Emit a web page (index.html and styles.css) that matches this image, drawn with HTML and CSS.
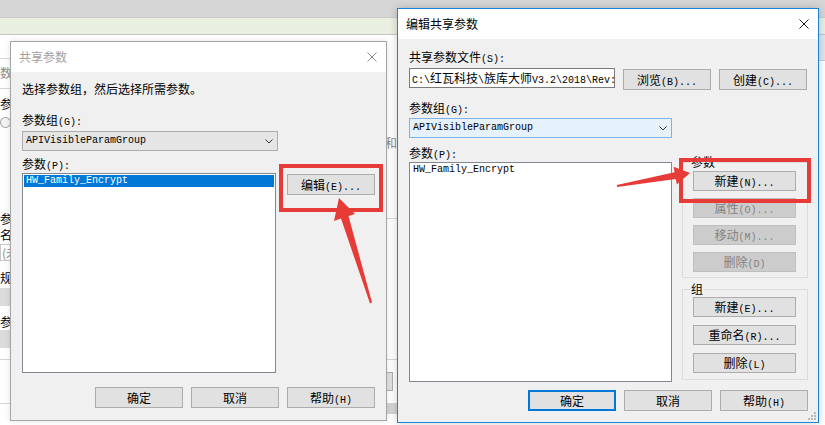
FILE: index.html
```html
<!DOCTYPE html>
<html lang="zh-CN">

<head>
    <meta charset="UTF-8">
    <meta name="viewport" content="width=device-width, initial-scale=1.0">
    <title>编辑共享参数</title>

    <link rel="stylesheet" href="styles.css">
</head>

<body>
    <!-- application window behind the dialogs -->
    <div class="desk">
        <div class="app-bar"></div>
        <div class="app-strip"></div>
        <div class="app-body">
            <div class="bg-win">
                <div class="bg-col bg-col-left">
                    <div class="bg-tabbar"></div>
                    <p class="bg-text bg-faint bg-t1">数据</p>
                    <div class="bg-rule bg-r1"></div>
                    <p class="bg-text bg-t2">参数</p>
                    <span class="bg-radio"></span>
                    <p class="bg-text bg-t3">参数</p>
                    <p class="bg-text">名称</p>
                    <div class="bg-field">(未</div>
                    <p class="bg-text bg-t4">规格</p>
                    <div class="bg-field bg-field-gray bg-f2"></div>
                    <p class="bg-text bg-t5">参数</p>
                    <div class="bg-field bg-field-gray"></div>
                    <div class="bg-rule bg-r2"></div>
                    <div class="bg-rule bg-r3"></div>
                </div>
                <div class="bg-col bg-col-right">
                    <p class="bg-text bg-faint bg-t6">和</p>
                    <div class="bg-rule bg-r4"></div>
                    <div class="bg-rule bg-r5"></div>
                    <div class="bg-btn"></div>
                    <div class="bg-bar"></div>
                </div>
            </div>
            <div class="bg-side">
                <div class="bg-band"></div>
            </div>
        </div>
    </div>

    <!-- 共享参数 (inactive) -->
    <section class="dlg dlg-share">
        <header class="dlg-title">
            <span>共享参数</span>
            <svg class="close" width="10" height="10" viewBox="0 0 10 10">
                <path d="M0.5 0.5 L9.5 9.5 M9.5 0.5 L0.5 9.5" />
            </svg>
        </header>
        <div class="share-body">
            <p class="lbl">选择参数组，然后选择所需参数。</p>
            <p class="lbl share-lbl-g">参数组<span class="m">(G):</span></p>
            <div class="combo share-combo">
                <span class="m">APIVisibleParamGroup</span>
                <svg class="chevron" width="8" height="5" viewBox="0 0 8 5">
                    <polyline points="0.5,0.5 4,4 7.5,0.5" />
                </svg>
            </div>
            <p class="lbl share-lbl-p">参数<span class="m">(P):</span></p>
            <div class="share-main">
                <ul class="list share-list">
                    <li class="m selected">HW_Family_Encrypt</li>
                </ul>
                <button class="btn share-edit">编辑<span class="m">(E)...</span></button>
            </div>
            <div class="footer share-footer">
                <button class="btn">确定</button>
                <button class="btn">取消</button>
                <button class="btn">帮助<span class="m">(H)</span></button>
            </div>
        </div>
    </section>

    <!-- 编辑共享参数 (active) -->
    <section class="dlg dlg-edit">
        <header class="dlg-title">
            <span>编辑共享参数</span>
            <svg class="close close-active" width="10" height="10" viewBox="0 0 10 10">
                <path d="M0.5 0.5 L9.5 9.5 M9.5 0.5 L0.5 9.5" />
            </svg>
        </header>
        <div class="edit-body">
            <p class="lbl">共享参数文件<span class="m">(S):</span></p>
            <div class="file-row">
                <div class="path"><span class="m">C:\</span>红瓦科技<span class="m">\</span>族库大师<span class="m">V3.2\2018\Rev:</span></div>
                <button class="btn">浏览<span class="m">(B)...</span></button>
                <button class="btn">创建<span class="m">(C)...</span></button>
            </div>
            <div class="edit-main">
                <p class="lbl edit-lbl-g">参数组<span class="m">(G):</span></p>
                <div class="combo combo-hot edit-combo">
                    <span class="m">APIVisibleParamGroup</span>
                    <svg class="chevron" width="8" height="5" viewBox="0 0 8 5">
                        <polyline points="0.5,0.5 4,4 7.5,0.5" />
                    </svg>
                </div>
                <p class="lbl edit-lbl-p">参数<span class="m">(P):</span></p>
                <ul class="list edit-list">
                    <li class="m">HW_Family_Encrypt</li>
                </ul>
                <div class="side">
                    <fieldset class="group">
                        <legend>参数</legend>
                        <div class="group-btns">
                            <button class="btn btn-side">新建<span class="m">(N)...</span></button>
                            <button class="btn btn-side" disabled>属性<span class="m">(O)...</span></button>
                            <button class="btn btn-side" disabled>移动<span class="m">(M)...</span></button>
                            <button class="btn btn-side" disabled>删除<span class="m">(D)</span></button>
                        </div>
                    </fieldset>
                    <fieldset class="group group-2">
                        <legend>组</legend>
                        <div class="group-btns group-btns-2">
                            <button class="btn btn-side">新建<span class="m">(E)...</span></button>
                            <button class="btn btn-side">重命名<span class="m">(R)...</span></button>
                            <button class="btn btn-side">删除<span class="m">(L)</span></button>
                        </div>
                    </fieldset>
                </div>
            </div>
            <div class="footer edit-footer">
                <button class="btn btn-default">确定</button>
                <button class="btn">取消</button>
                <button class="btn">帮助<span class="m">(H)</span></button>
            </div>
        </div>
        <svg class="grip" width="8" height="8" viewBox="0 0 8 8">
            <rect x="6" y="0" width="2" height="2" />
            <rect x="3" y="3" width="2" height="2" />
            <rect x="6" y="3" width="2" height="2" />
            <rect x="0" y="6" width="2" height="2" />
            <rect x="3" y="6" width="2" height="2" />
            <rect x="6" y="6" width="2" height="2" />
        </svg>
    </section>

    <!-- red annotation marks drawn over the screenshot -->
    <svg class="marks" width="825" height="425" viewBox="0 0 825 425">
        <rect x="281" y="166" width="100" height="44" />
        <polygon points="339,198 355,214 348.5,216 372,302.5 370,303.5 341,218.5 334,221" />
        <rect x="681" y="160" width="128" height="41" />
        <polygon points="690,173 676.8,184.5 675.8,179 617.2,187 616.8,185 674.6,172.2 673.6,166.7" />
    </svg>
</body>

</html>
```

FILE: styles.css
```css
* {
    box-sizing: border-box;
}

body {
    margin: 0;
    width: 825px;
    height: 425px;
    position: relative;
    overflow: hidden;
    background: #ffffff;
    font-family: "Noto Sans CJK SC", sans-serif;
    font-size: 12px;
    line-height: 16px;
    color: #000;
}

p {
    margin: 0;
}

.m {
    font-family: "Liberation Mono", monospace;
    font-size: 10px;
    line-height: 10px;
}

.lbl {
    height: 16px;
    white-space: nowrap;
}

/* background window */
.desk {
    position: absolute;
    inset: 0;
    display: flex;
    flex-direction: column;
}

.app-bar {
    height: 18px;
    background: #d6d6d6;
    border-bottom: 1px solid #c8c8c8;
}

.app-strip {
    height: 17px;
    background: #e9f0e2;
    border-bottom: 1px solid #c4c4c4;
}

.app-body {
    flex: 1;
    display: flex;
}

.bg-win {
    width: 397px;
    display: flex;
    justify-content: space-between;
    overflow: hidden;
}

.bg-col {
    width: 30px;
    display: flex;
    flex-direction: column;
}

.bg-tabbar {
    height: 24px;
    border-bottom: 1px solid #d9d9d9;
}

.bg-text {
    height: 16px;
    white-space: nowrap;
}

.bg-faint {
    color: #8a8a8a;
}

.bg-t1 {
    margin-top: 6px;
}

.bg-rule {
    border-top: 1px solid #d6d6d6;
}

.bg-r1 {
    margin-top: 7px;
}

.bg-t2 {
    margin-top: 7px;
}

.bg-radio {
    width: 11px;
    height: 11px;
    margin-top: 5px;
    border: 1px solid #9a9a9a;
    border-radius: 50%;
    background: #f4f4f4;
}

.bg-t3 {
    margin-top: 83px;
}

.bg-field {
    height: 17px;
    margin-top: 1px;
    padding-left: 1px;
    border: 1px solid #c8c8c8;
    color: #8a8a8a;
    line-height: 15px;
    white-space: nowrap;
}

.bg-field-gray {
    height: 18px;
    margin-top: 0;
    border: none;
    background: #dcdcdc;
}

.bg-t4 {
    margin-top: 9px;
}

.bg-f2 {
    margin-top: 2px;
}

.bg-t5 {
    margin-top: 8px;
}

.bg-r2 {
    margin-top: 11px;
}

.bg-r3 {
    margin-top: 43px;
}

.bg-col-right {
    width: 24px;
}

.bg-t6 {
    margin-top: 100px;
    padding-left: 12px;
}

.bg-r4 {
    margin-top: 67px;
}

.bg-r5 {
    margin-top: 140px;
}

.bg-btn {
    width: 20px;
    height: 19px;
    margin-top: 12px;
    border: 1px solid #adadad;
    background: #e1e1e1;
}

.bg-bar {
    height: 11px;
    margin-top: 12px;
    background: #d4d4d4;
}

.bg-side {
    flex: 1;
}

.bg-band {
    height: 26px;
    background: #dfe5ec;
    border-bottom: 1px solid #c9ced4;
}

/* dialogs */
.dlg {
    position: absolute;
    display: flex;
    flex-direction: column;
    background: #f0f0f0;
}

.dlg-share {
    left: 10px;
    top: 41px;
    width: 377px;
    height: 380px;
    border: 1px solid #a5a5a5;
    box-shadow: 0 0 6px rgba(0, 0, 0, 0.12);
}

.dlg-edit {
    left: 397px;
    top: 8px;
    width: 422px;
    height: 415px;
    border: 1px solid #1c84d6;
    box-shadow: 0 0 8px rgba(0, 0, 0, 0.2);
}

.dlg-title {
    height: 30px;
    flex-shrink: 0;
    display: flex;
    align-items: center;
    justify-content: space-between;
    padding: 0 9px 0 8px;
    background: #ffffff;
}

.dlg-share .dlg-title {
    color: #a0a0a0;
}

.close path {
    stroke: #8c8c8c;
    stroke-width: 1;
    fill: none;
}

.close-active path {
    stroke: #1a1a1a;
}

.grip {
    position: absolute;
    right: 2px;
    bottom: 2px;
}

.grip rect {
    fill: #b9b9b9;
}

/* controls */
.btn {
    width: 88px;
    height: 21px;
    padding: 0;
    border: 1px solid #adadad;
    background: #e1e1e1;
    font-family: inherit;
    font-size: 12px;
    line-height: 16px;
    color: #000;
    white-space: nowrap;
}

.btn-default {
    border: 2px solid #0078d7;
}

.btn-side {
    width: 103px;
    height: 20px;
}

.btn:disabled {
    background: #cccccc;
    border-color: #bfbfbf;
    color: #838383;
}

.combo {
    height: 20px;
    display: flex;
    align-items: center;
    justify-content: space-between;
    padding: 0 4px 0 3px;
    border: 1px solid #adadad;
    background: #e5e5e5;
}

.combo-hot {
    border-color: #7eb4ea;
    background: #e5f1fb;
}

.chevron polyline {
    fill: none;
    stroke: #333;
    stroke-width: 1;
}

.list {
    margin: 0;
    padding: 1px;
    list-style: none;
    border: 1px solid #828790;
    background: #ffffff;
}

.list li {
    height: 12px;
    padding-left: 2px;
    line-height: 12px;
}

.list li.selected {
    background: #0078d7;
    color: #ffffff;
}

.footer {
    display: flex;
    justify-content: flex-end;
    gap: 8px;
}

/* 共享参数 layout */
.share-body {
    padding: 9px 11px 0 11px;
}

.share-lbl-g {
    margin-top: 15px;
}

.share-combo {
    width: 256px;
    margin-top: 3px;
}

.share-lbl-p {
    margin-top: 5px;
}

.share-main {
    display: flex;
    align-items: flex-start;
    margin-top: 1px;
}

.share-list {
    width: 254px;
    height: 200px;
}

.share-edit {
    margin: 1px 0 0 11px;
}

.share-footer {
    margin-top: 14px;
}

/* 编辑共享参数 layout */
.edit-body {
    padding: 10px 10px 0 11px;
}

.file-row {
    display: flex;
    align-items: flex-start;
    gap: 8px;
    margin-top: 3px;
}

.path {
    width: 206px;
    height: 20px;
    padding-left: 2px;
    border: 1px solid #7a7a7a;
    background: #ffffff;
    line-height: 18px;
    white-space: nowrap;
    overflow: hidden;
}

.file-row .btn {
    margin-top: 1px;
}

.edit-main {
    display: grid;
    grid-template-columns: 263px 126px;
    column-gap: 10px;
}

.edit-lbl-g {
    grid-column: 1;
    margin-top: 10px;
}

.edit-combo {
    grid-column: 1;
    margin-top: 2px;
}

.edit-lbl-p {
    grid-column: 1;
    grid-row: 3;
    margin-top: 7px;
}

.edit-list {
    grid-column: 1;
    grid-row: 4;
    height: 220px;
    margin-top: 1px;
}

.side {
    grid-column: 2;
    grid-row: 3 / 5;
    padding-top: 16px;
}

.group {
    margin: 0;
    padding: 0 11px 5px 10px;
    border: 1px solid #dcdcdc;
}

.group legend {
    margin-left: -3px;
    padding: 0 1px;
    font-size: 12px;
    line-height: 16px;
}

.group-btns {
    display: flex;
    flex-direction: column;
    gap: 7px;
    margin-top: 1px;
}

.group-2 {
    margin-top: 3px;
    padding-bottom: 6px;
}

.group-btns-2 {
    gap: 8px;
    margin-top: 0;
}

.edit-footer {
    margin-top: 8px;
}

/* annotation overlay */
.marks {
    position: absolute;
    left: 0;
    top: 0;
    pointer-events: none;
}

.marks rect {
    fill: none;
    stroke: #e63b36;
    stroke-width: 4;
}

.marks polygon {
    fill: #e63b36;
}
```
